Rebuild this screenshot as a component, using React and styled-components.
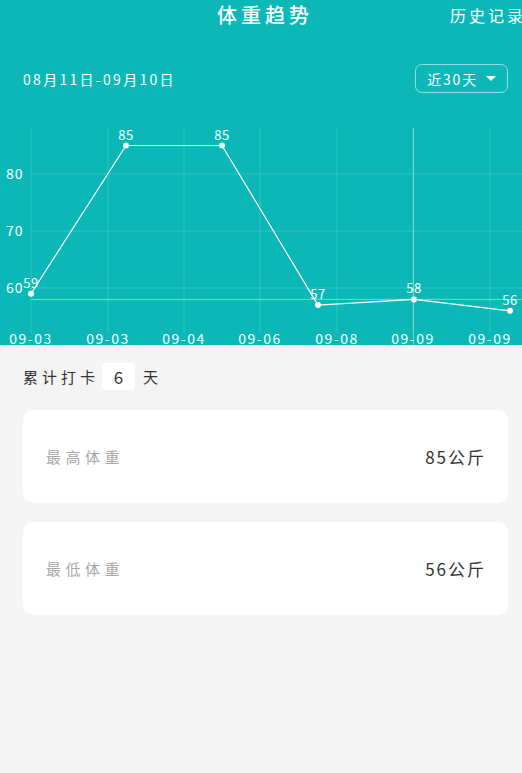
import React from "react";
import styled, { createGlobalStyle } from "styled-components";

const GlobalStyle = createGlobalStyle`
  html, body {
    margin: 0;
    padding: 0;
    background: #f4f4f4;
  }
  body {
    font-family: "Noto Sans CJK SC", "Noto Sans", sans-serif;
  }
`;

const Page = styled.div`
  width: 522px;
  height: 773px;
  overflow: hidden;
  background: #f4f4f4;
`;

const TealPanel = styled.section`
  height: 345px;
  background: #0bb8b7;
  color: #ffffff;
  overflow: hidden;
`;

const TopBar = styled.header`
  display: grid;
  grid-template-columns: 1fr auto 1fr;
  align-items: center;
  height: 30px;
`;

const Title = styled.h1`
  grid-column: 2;
  margin: 0 0 0 8px;
  font-size: 20px;
  font-weight: 500;
  letter-spacing: 4px;
  line-height: 30px;
`;

const HistoryLink = styled.a`
  justify-self: end;
  margin-right: -4px;
  font-size: 16px;
  letter-spacing: 3px;
  white-space: nowrap;
  color: #ffffff;
  line-height: 30px;
`;

const DateRow = styled.div`
  display: flex;
  align-items: center;
  justify-content: space-between;
  padding: 34px 14px 0 23px;
`;

const DateRange = styled.span`
  font-size: 14px;
  letter-spacing: 2.3px;
`;

const RangeSelect = styled.button`
  display: flex;
  align-items: center;
  gap: 8px;
  height: 29px;
  padding: 0 11px;
  border: 1px solid rgba(255, 255, 255, 0.55);
  border-radius: 7px;
  background: transparent;
  color: #ffffff;
  font-family: inherit;
  font-size: 14px;
  letter-spacing: 1.8px;
`;

const Caret = styled.span`
  width: 0;
  height: 0;
  border-left: 5px solid transparent;
  border-right: 5px solid transparent;
  border-top: 5px solid #ffffff;
`;

const Chart = styled.svg`
  display: block;
  margin-top: 7px;
  font-family: "Noto Sans CJK SC", "Noto Sans", sans-serif;
`;

const Body = styled.section`
  padding: 18px 14px 0 23px;
`;

const CheckinRow = styled.div`
  display: flex;
  align-items: center;
  font-size: 15px;
  letter-spacing: 4px;
  color: #333333;
`;

const CountBox = styled.span`
  display: inline-flex;
  align-items: center;
  justify-content: center;
  width: 33px;
  height: 27px;
  margin: 0 8px 0 3px;
  border-radius: 4px;
  background: #ffffff;
  font-size: 17px;
  letter-spacing: 0;
`;

const Card = styled.div`
  display: flex;
  align-items: center;
  justify-content: space-between;
  height: 93px;
  margin-top: ${(p) => p.$gap}px;
  padding: 0 22px 0 23px;
  border-radius: 10px;
  background: #ffffff;
`;

const CardLabel = styled.span`
  font-size: 15px;
  letter-spacing: 4.5px;
  color: #a8a8a8;
`;

const CardValue = styled.span`
  font-size: 17px;
  letter-spacing: 2px;
  color: #333333;
`;

// chart coordinates (svg top sits at page y = 100)
const TOP = 100;
const yOf = (v) => 288 - (v - 60) * 5.7 - TOP;
const gridX = [31, 108, 184, 260, 337, 413, 490];
const xLabels = ["09-03", "09-03", "09-04", "09-06", "09-08", "09-09", "09-09"];
const points = [
  { x: 31, v: 59 },
  { x: 126, v: 85 },
  { x: 222, v: 85 },
  { x: 318, v: 57 },
  { x: 414, v: 58 },
  { x: 510, v: 56 },
];

function WeightChart() {
  const line = points.map((p) => `${p.x},${yOf(p.v)}`).join(" ");
  return (
    <Chart width="522" height="245" viewBox="0 0 522 245">
      {gridX.map((x) => (
        <line key={x} x1={x} y1={28} x2={x} y2={233} stroke="rgba(255,255,255,0.14)" strokeWidth="1" />
      ))}
      {[80, 70, 60].map((v) => (
        <g key={v}>
          <line x1={31} y1={yOf(v)} x2={522} y2={yOf(v)} stroke="rgba(255,255,255,0.14)" strokeWidth="1" />
          <text x={6} y={yOf(v) + 5} fontSize="14" fill="#ffffff" letterSpacing="1">{v}</text>
        </g>
      ))}
      <line x1={413.5} y1={28} x2={413.5} y2={245} stroke="rgba(235,240,190,0.5)" strokeWidth="1" />
      <line x1={31} y1={yOf(58)} x2={522} y2={yOf(58)} stroke="rgba(235,240,190,0.5)" strokeWidth="1" />
      <polyline points={line} fill="none" stroke="#ffffff" strokeWidth="1.2" />
      {points.map((p, i) => (
        <g key={i}>
          <circle cx={p.x} cy={yOf(p.v)} r="3" fill="#ffffff" />
          <text x={p.x} y={yOf(p.v) - 6} fontSize="13" fill="#ffffff" textAnchor="middle" letterSpacing="0.5">{p.v}</text>
        </g>
      ))}
      {gridX.map((x, i) => (
        <text key={i} x={x} y={244} fontSize="14" fill="#ffffff" textAnchor="middle" letterSpacing="1.5">
          {xLabels[i]}
        </text>
      ))}
    </Chart>
  );
}

export default function App() {
  return (
    <Page>
      <GlobalStyle />
      <TealPanel>
        <TopBar>
          <Title>体重趋势</Title>
          <HistoryLink>历史记录</HistoryLink>
        </TopBar>
        <DateRow>
          <DateRange>08月11日-09月10日</DateRange>
          <RangeSelect>
            近30天
            <Caret />
          </RangeSelect>
        </DateRow>
        <WeightChart />
      </TealPanel>
      <Body>
        <CheckinRow>
          累计打卡
          <CountBox>6</CountBox>
          天
        </CheckinRow>
        <Card $gap={20}>
          <CardLabel>最高体重</CardLabel>
          <CardValue>85公斤</CardValue>
        </Card>
        <Card $gap={19}>
          <CardLabel>最低体重</CardLabel>
          <CardValue>56公斤</CardValue>
        </Card>
      </Body>
    </Page>
  );
}
